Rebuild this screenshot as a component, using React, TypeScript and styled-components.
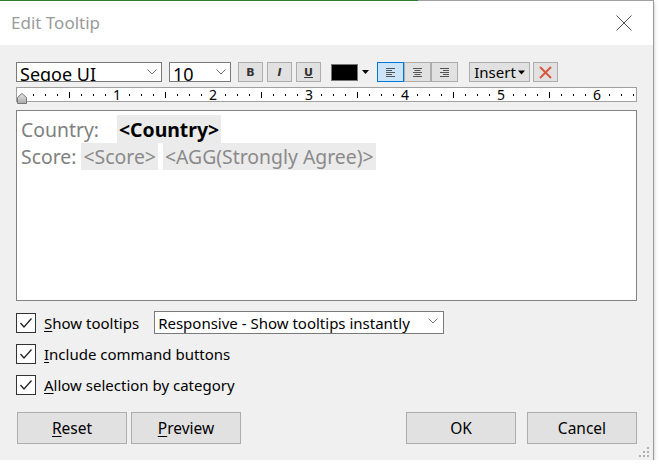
import React from "react";
import styled, { createGlobalStyle } from "styled-components";

const GlobalStyle = createGlobalStyle`
  html, body { margin: 0; padding: 0; background: #ffffff; }
  body { font-family: "Noto Sans", "Open Sans", sans-serif; }
  * { box-sizing: border-box; }
`;

const FONT = `"Noto Sans", "Open Sans", sans-serif`;

const Dialog = styled.div`
  position: relative;
  width: 654px;
  height: 460px;
  background: #f0f0f0;
  border-right: 1px solid #9a9a9a;
  box-shadow: 0 2px 4px rgba(0, 0, 0, 0.25);
  display: flex;
  flex-direction: column;
  font-family: ${FONT};
`;

const TopEdge = styled.div`
  display: flex;
  height: 1px;
`;

const EdgeSeg = styled.div<{ $color: string; $w?: number }>`
  background: ${(p) => p.$color};
  ${(p) => (p.$w ? `width: ${p.$w}px;` : "flex: 1;")}
`;

const TitleBar = styled.div`
  height: 44px;
  background: #ffffff;
  display: flex;
  align-items: center;
  justify-content: space-between;
  padding: 0 21px 0 11px;
`;

const Title = styled.span`
  font-size: 17px;
  color: #9a9a9a;
  margin-top: -2px;
`;

const Body = styled.div`
  flex: 1;
  display: flex;
  flex-direction: column;
  padding: 17px 16px 0 16px;
`;

const Toolbar = styled.div`
  display: flex;
  align-items: center;
  height: 20px;
`;

const SelectBox = styled.div<{ $w: number; $ml?: number }>`
  width: ${(p) => p.$w}px;
  height: 20px;
  margin-left: ${(p) => p.$ml ?? 0}px;
  background: #fff;
  border: 1px solid #7a7a7a;
  position: relative;
  overflow: hidden;
  display: flex;
  align-items: flex-start;
`;

const SelectText = styled.span`
  font-size: 18px;
  line-height: 20px;
  padding-left: 3px;
  margin-top: 1px;
  color: #000;
  white-space: nowrap;
`;

const Chevron = styled.svg<{ $right: number }>`
  position: absolute;
  right: ${(p) => p.$right}px;
  top: 6px;
`;

const ToolBtn = styled.div<{ $ml?: number; $active?: boolean; $w?: number }>`
  width: ${(p) => p.$w ?? 25}px;
  height: 20px;
  margin-left: ${(p) => p.$ml ?? 0}px;
  background: ${(p) => (p.$active ? "#cce4f7" : "#e1e1e1")};
  border: 1px solid ${(p) => (p.$active ? "#0078d7" : "#adadad")};
  display: flex;
  align-items: center;
  justify-content: center;
  font-family: "DejaVu Sans", sans-serif;
  font-size: 11px;
  color: #333;
`;

const Group = styled.div<{ $ml: number }>`
  display: flex;
  margin-left: ${(p) => p.$ml}px;
`;

const ColorPick = styled.div`
  margin-left: 10px;
  width: 40px;
  height: 20px;
  display: flex;
  align-items: center;
`;

const Swatch = styled.div`
  width: 27px;
  height: 17px;
  background: #000;
  border: 1px solid #777;
`;

const InsertBtn = styled.div`
  margin-left: 11px;
  width: 61px;
  height: 20px;
  background: #e1e1e1;
  border: 1px solid #adadad;
  display: flex;
  align-items: center;
  justify-content: center;
  gap: 2px;
  font-size: 15px;
  color: #000;
`;

const ClearBtn = styled.div`
  margin-left: 3px;
  width: 25px;
  height: 20px;
  background: #e1e1e1;
  border: 1px solid #adadad;
  display: flex;
  align-items: center;
  justify-content: center;
`;

const Ruler = styled.div`
  position: relative;
  margin-top: 5px;
  height: 15px;
  background: #fff;
  border: 1px solid #a0a0a0;
`;

const IndentMarker = styled.svg`
  position: absolute;
  left: 0px;
  top: 5px;
`;

const Editor = styled.div`
  margin-top: 8px;
  height: 191px;
  background: #fff;
  border: 1px solid #828282;
  padding: 4px 4px;
  font-size: 19.4px;
  color: #808080;
`;

const Line = styled.div<{ $h: number }>`
  height: ${(p) => p.$h}px;
  display: flex;
  align-items: stretch;
  white-space: nowrap;
`;

const Plain = styled.span<{ $w?: number }>`
  display: flex;
  align-items: center;
  ${(p) => (p.$w ? `width: ${p.$w}px;` : "")}
`;

const Token = styled.span<{ $bold?: boolean; $ml?: number }>`
  display: flex;
  align-items: center;
  background: #ebebeb;
  padding: 0 2px;
  margin-left: ${(p) => p.$ml ?? 0}px;
  font-weight: ${(p) => (p.$bold ? 700 : 400)};
  color: ${(p) => (p.$bold ? "#000" : "#8a8a8a")};
`;

const Options = styled.div`
  margin-top: 11px;
  display: flex;
  flex-direction: column;
  gap: 10px;
`;

const OptRow = styled.div`
  display: flex;
  align-items: center;
  height: 21px;
`;

const CheckBox = styled.div`
  width: 20px;
  height: 20px;
  background: #fff;
  border: 1px solid #333;
  display: flex;
  align-items: center;
  justify-content: center;
`;

const Label = styled.span`
  margin-left: 8px;
  font-size: 15px;
  color: #000;
`;

const U = styled.span`
  text-decoration: underline;
  text-underline-offset: 2px;
`;

const Dropdown = styled.div`
  margin-left: 15px;
  width: 290px;
  height: 23px;
  background: #fff;
  border: 1px solid #7a7a7a;
  position: relative;
  display: flex;
  align-items: center;
  padding-left: 3px;
  font-size: 15px;
  color: #000;
`;

const Footer = styled.div`
  margin-top: 17px;
  display: flex;
  align-items: center;
  padding-left: 1px;
`;

const Button = styled.div<{ $ml?: number }>`
  width: 110px;
  height: 32px;
  margin-left: ${(p) => p.$ml ?? 0}px;
  background: #e1e1e1;
  border: 1px solid #adadad;
  display: flex;
  align-items: center;
  justify-content: center;
  font-size: 15.5px;
  color: #000;
`;

const Grip = styled.svg`
  position: absolute;
  right: 4px;
  bottom: 3px;
`;

const ChevronIcon = ({ right }: { right: number }) => (
  <Chevron $right={right} width="10" height="6" viewBox="0 0 10 6">
    <polyline points="0.5,0.5 5,5 9.5,0.5" fill="none" stroke="#707070" strokeWidth="1" />
  </Chevron>
);

const AlignIcon = ({ kind }: { kind: "l" | "c" | "r" }) => {
  const widths = [9, 6, 9, 6, 9];
  return (
    <svg width="11" height="9" viewBox="0 0 11 9">
      {widths.map((w, i) => {
        const x = kind === "l" ? 1 : kind === "c" ? (11 - w) / 2 : 10 - w;
        return <rect key={i} x={x} y={i * 2} width={w} height="1" fill="#555" />;
      })}
    </svg>
  );
};

const Check = () => (
  <svg width="14" height="12" viewBox="0 0 14 12">
    <polyline points="1.5,6 5,10 12.5,1.5" fill="none" stroke="#222" strokeWidth="1.3" />
  </svg>
);

const RulerMarks = () => {
  const items: React.ReactNode[] = [];
  const start = 4;
  for (let i = 0; i <= 51; i++) {
    const x = start + i * 12;
    if (x > 618) break;
    if (i % 8 === 0) {
      if (i > 0) {
        items.push(
          <text
            key={"n" + i}
            x={x}
            y="12"
            fontSize="14"
            textAnchor="middle"
            fontFamily={FONT}
            fill="#000"
          >
            {i / 8}
          </text>
        );
      }
    } else if (i % 4 === 0) {
      items.push(<rect key={"h" + i} x={x} y="4" width="1" height="6" fill="#000" />);
    } else {
      items.push(<rect key={"t" + i} x={x} y="6" width="1" height="2" fill="#000" />);
    }
  }
  return (
    <svg width="619" height="13" viewBox="0 0 619 13" style={{ display: "block", overflow: "visible" }}>
      {items}
    </svg>
  );
};

export default function App() {
  return (
    <>
      <GlobalStyle />
      <Dialog>
        <TopEdge>
          <EdgeSeg $color="#2e7d32" $w={418} />
          <EdgeSeg $color="#a0a0a0" />
        </TopEdge>
        <TitleBar>
          <Title>Edit Tooltip</Title>
          <svg width="16" height="16" viewBox="0 0 16 16">
            <line x1="0.5" y1="0.5" x2="15.5" y2="15.5" stroke="#555" strokeWidth="1" />
            <line x1="15.5" y1="0.5" x2="0.5" y2="15.5" stroke="#555" strokeWidth="1" />
          </svg>
        </TitleBar>
        <Body>
          <Toolbar>
            <SelectBox $w={146}>
              <SelectText>Segoe UI</SelectText>
              <ChevronIcon right={4} />
            </SelectBox>
            <SelectBox $w={62} $ml={7}>
              <SelectText>10</SelectText>
              <ChevronIcon right={4} />
            </SelectBox>
            <ToolBtn $ml={7} style={{ fontWeight: 700 }}>B</ToolBtn>
            <ToolBtn $ml={4} style={{ fontStyle: "italic", fontWeight: 700 }}>I</ToolBtn>
            <ToolBtn $ml={4} style={{ textDecoration: "underline", fontWeight: 700 }}>U</ToolBtn>
            <ColorPick>
              <Swatch />
              <svg width="10" height="6" viewBox="0 0 10 6" style={{ marginLeft: 3 }}>
                <polygon points="1,1 8,1 4.5,5" fill="#000" />
              </svg>
            </ColorPick>
            <Group $ml={6}>
              <ToolBtn $active $w={27}>
                <AlignIcon kind="l" />
              </ToolBtn>
              <ToolBtn $w={27}>
                <AlignIcon kind="c" />
              </ToolBtn>
              <ToolBtn $w={27}>
                <AlignIcon kind="r" />
              </ToolBtn>
            </Group>
            <InsertBtn>
              Insert
              <svg width="7" height="5" viewBox="0 0 7 5">
                <polygon points="0,0.5 7,0.5 3.5,4.5" fill="#000" />
              </svg>
            </InsertBtn>
            <ClearBtn>
              <svg width="13" height="13" viewBox="0 0 13 13">
                <line x1="1" y1="1" x2="12" y2="12" stroke="#d9573c" strokeWidth="2" />
                <line x1="12" y1="1" x2="1" y2="12" stroke="#d9573c" strokeWidth="2" />
              </svg>
            </ClearBtn>
          </Toolbar>
          <Ruler>
            <RulerMarks />
            <IndentMarker width="11" height="11" viewBox="0 0 11 11">
              <defs>
                <linearGradient id="ig" x1="0" y1="0" x2="0" y2="1">
                  <stop offset="0" stopColor="#e8e8e8" />
                  <stop offset="1" stopColor="#a8a8a8" />
                </linearGradient>
              </defs>
              <polygon points="5,0.5 9.5,4.5 9.5,10.5 0.5,10.5 0.5,4.5" fill="url(#ig)" stroke="#777" strokeWidth="1" />
            </IndentMarker>
          </Ruler>
          <Editor>
            <Line $h={28}>
              <Plain $w={96}>Country:</Plain>
              <Token $bold>&lt;Country&gt;</Token>
            </Line>
            <Line $h={27}>
              <Plain>Score:&nbsp;</Plain>
              <Token>&lt;Score&gt;</Token>
              <Token $ml={5}>&lt;AGG(Strongly Agree)&gt;</Token>
            </Line>
          </Editor>
          <Options>
            <OptRow>
              <CheckBox>
                <Check />
              </CheckBox>
              <Label>
                <U>S</U>how tooltips
              </Label>
              <Dropdown>
                Responsive - Show tooltips instantly
                <ChevronIcon right={5} />
              </Dropdown>
            </OptRow>
            <OptRow>
              <CheckBox>
                <Check />
              </CheckBox>
              <Label>
                <U>I</U>nclude command buttons
              </Label>
            </OptRow>
            <OptRow>
              <CheckBox>
                <Check />
              </CheckBox>
              <Label>
                <U>A</U>llow selection by category
              </Label>
            </OptRow>
          </Options>
          <Footer>
            <Button>
              <span>
                <U>R</U>eset
              </span>
            </Button>
            <Button $ml={4}>
              <span>
                <U>P</U>review
              </span>
            </Button>
            <Button $ml={165}>OK</Button>
            <Button $ml={11}>Cancel</Button>
          </Footer>
        </Body>
        <Grip width="10" height="10" viewBox="0 0 10 10">
          {[
            [8, 0],
            [8, 4],
            [4, 4],
            [8, 8],
            [4, 8],
            [0, 8],
          ].map(([x, y], i) => (
            <rect key={i} x={x} y={y} width="2" height="2" fill="#b0b0b0" />
          ))}
        </Grip>
      </Dialog>
    </>
  );
}
